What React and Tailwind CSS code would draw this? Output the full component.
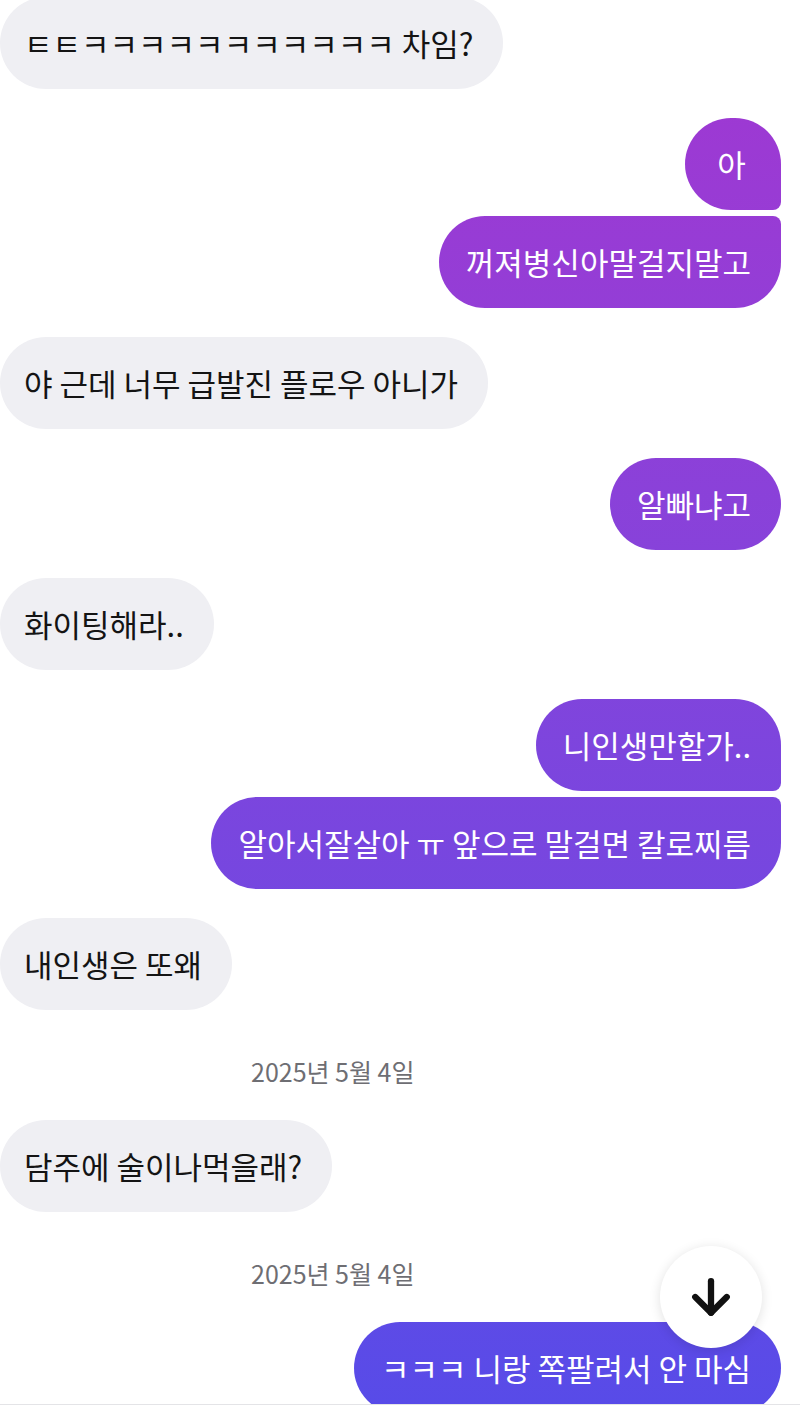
import React from "react";
import { ArrowDown } from "lucide-react";

const font = { fontFamily: '"Noto Sans CJK KR", "Noto Sans", sans-serif' };

function Theirs({ children, className = "" }) {
  return (
    <div className={"flex justify-start " + className}>
      <div className="h-[92px] flex items-center rounded-full bg-[#efeff3] pl-[24px] pr-[30px] text-[31px] text-[#141414] whitespace-nowrap">
        {children}
      </div>
    </div>
  );
}

function Mine({ children, corner = "rounded-full", className = "" }) {
  return (
    <div className={"flex justify-end pr-[19px] " + className}>
      <div
        className={
          "h-[92px] min-w-[96px] flex items-center justify-center bg-fixed bg-linear-to-b from-[#a236d1] to-[#574be8] pl-[27px] pr-[30px] text-[31px] text-white whitespace-nowrap " +
          corner
        }
      >
        {children}
      </div>
    </div>
  );
}

function DateLine({ className = "" }) {
  return (
    <div className={"pl-[251px] text-[25px] leading-[24px] text-[#6e6e73] " + className}>
      2025년 5월 4일
    </div>
  );
}

export default function App() {
  return (
    <div className="w-[800px] h-[1415px] bg-white overflow-hidden" style={font}>
      <div className="relative h-[1404px] overflow-hidden">
        <div className="flex flex-col -mt-[3px]">
          <Theirs>ㅌㅌㅋㅋㅋㅋㅋㅋㅋㅋㅋㅋㅋ 차임?</Theirs>
          <Mine corner="rounded-[46px] rounded-br-lg" className="mt-[29px]">아</Mine>
          <Mine corner="rounded-[46px] rounded-tr-lg" className="mt-[6px]">꺼져병신아말걸지말고</Mine>
          <Theirs className="mt-[29px]">야 근데 너무 급발진 플로우 아니가</Theirs>
          <Mine className="mt-[29px]">알빠냐고</Mine>
          <Theirs className="mt-[28px]">화이팅해라..</Theirs>
          <Mine corner="rounded-[46px] rounded-br-lg" className="mt-[29px]">니인생만할가..</Mine>
          <Mine corner="rounded-[46px] rounded-tr-lg" className="mt-[6px]">알아서잘살아 ㅠ 앞으로 말걸면 칼로찌름</Mine>
          <Theirs className="mt-[29px]">내인생은 또왜</Theirs>
          <DateLine className="mt-[49px]" />
          <Theirs className="mt-[37px]">담주에 술이나먹을래?</Theirs>
          <DateLine className="mt-[49px]" />
          <Mine className="mt-[37px]">ㅋㅋㅋ 니랑 쪽팔려서 안 마심</Mine>
        </div>
        <button className="absolute left-[660px] top-[1246px] w-[102px] h-[102px] rounded-full bg-white flex items-center justify-center shadow-[0_2px_12px_rgba(0,0,0,0.12)]">
          <ArrowDown size={54} strokeWidth={2.8} color="#111" />
        </button>
      </div>
      <div className="h-px bg-[#e4e4e7]" />
    </div>
  );
}
